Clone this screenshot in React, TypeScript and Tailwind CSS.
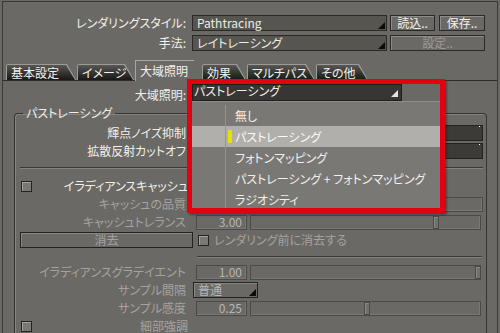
import React from "react"

const font = "font-['Noto_Sans_CJK_JP','Noto_Sans_CJK_SC',sans-serif] [font-feature-settings:'palt']"

function Tri({ light }: { light?: boolean }) {
  return (
    <svg width="7" height="7" viewBox="0 0 7 7" className="shrink-0">
      <polygon points="7,0 7,7 0,7" fill={light ? "#e6e4e0" : "#0b0b0b"} />
    </svg>
  )
}

function Checkbox() {
  return <div className="h-[11px] w-[11px] shrink-0 border border-[#242322] bg-[#7a7874] shadow-[inset_1px_1px_0_#a3a19d]" />
}

function Slider({ pos }: { pos: number }) {
  // pos = offset of the thumb inside the track, px
  return (
    <div className="relative ml-[3px] h-[15px] w-[231px] border border-[#4c4a47] shadow-[inset_-1px_-1px_0_#7a7874]">
      <div
        className="absolute top-0 bottom-0 w-[6px] border border-[#4c4a47] bg-[#72706c] shadow-[inset_1px_1px_0_#8a8884]"
        style={{ left: pos }}
      />
    </div>
  )
}

function NumField({ value }: { value: string }) {
  return (
    <div className="ml-[10px] flex h-[15px] w-[51px] items-center justify-end border border-[#4c4a47] pr-[4px] text-[#b9b7b3] shadow-[inset_-1px_-1px_0_#7a7874]">
      {value}
    </div>
  )
}

function Label({ text, dim }: { text: string; dim?: boolean }) {
  return (
    <div className={`w-[171px] shrink-0 text-right ${dim ? "text-[#a5a39f]" : "text-[#f2f0ec]"}`}>{text}</div>
  )
}

function Tab({ label, w }: { label: string; w: string }) {
  return (
    <div className={`h-[16px] ${w} bg-[#9d9b97] p-[1px] pb-0 [clip-path:polygon(0_0,calc(100%_-_9px)_0,100%_100%,0_100%)] rounded-tl-[2px]`}>
      <div className="flex h-full items-center bg-gradient-to-b from-[#5a5855] to-[#191817] pl-[4px] text-[#f4f2ee] [clip-path:polygon(0_0,calc(100%_-_9px)_0,100%_100%,0_100%)]">
        {label}
      </div>
    </div>
  )
}

const items = ["無し", "パストレーシング", "フォトンマッピング", "パストレーシング + フォトンマッピング", "ラジオシティ"]

export default function App() {
  return (
    <div className={`relative h-[333px] w-[500px] overflow-hidden bg-[#6b6965] pl-[2px] pt-[1px] text-[12px] leading-none ${font}`}>
      <div className="h-[340px] w-[496px] border-l border-t border-r border-[#3a3937]">
        {/* top rows */}
        <div className="flex h-[16px] items-center pt-0 mt-[13px]">
          <div className="w-[183px] text-right text-[#f2f0ec]">レンダリングスタイル:</div>
          <div className="ml-[6px] flex h-[16px] w-[195px] items-end justify-between border border-[#2a2927] bg-[#57554f] pb-[1px] pl-[4px] pr-[1px] text-[#eeece8]">
            <span className="self-center">Pathtracing</span>
            <Tri />
          </div>
          <div className="ml-[3px] flex h-[16px] w-[45px] items-center justify-center border border-[#2a2927] text-[#f2f0ec] shadow-[inset_1px_1px_0_#8e8c88]">読込..</div>
          <div className="ml-[4px] flex h-[16px] w-[46px] items-center justify-center border border-[#2a2927] text-[#f2f0ec] shadow-[inset_1px_1px_0_#8e8c88]">保存..</div>
        </div>
        <div className="mt-[4px] flex h-[16px] items-center">
          <div className="w-[183px] text-right text-[#f2f0ec]">手法:</div>
          <div className="ml-[6px] flex h-[16px] w-[195px] items-end justify-between border border-[#2a2927] bg-[#57554f] pb-[1px] pl-[4px] pr-[1px] text-[#eeece8]">
            <span className="self-center">レイトレーシング</span>
            <Tri />
          </div>
          <div className="ml-[3px] flex h-[16px] w-[95px] items-center justify-center border border-[#2a2927] text-[#9c9a96] shadow-[inset_1px_1px_0_#8e8c88]">設定..</div>
        </div>

        {/* tabs */}
        <div className="mt-[9px] flex h-[21px] items-end gap-[1px] border-b border-[#2e2d2b] pl-[3px]">
          <Tab label="基本設定" w="w-[70px]" />
          <Tab label="イメージ" w="w-[57px]" />
          <div className="mb-[-1px] flex h-[21px] w-[66px] items-center border-t border-l border-[#a8a6a2] bg-[#6b6965] pl-[4px] text-[#f4f2ee] [clip-path:polygon(0_0,calc(100%_-_7px)_0,100%_100%,0_100%)]">
            大域照明
          </div>
          <Tab label="効果" w="w-[44px]" />
          <Tab label="マルチパス" w="w-[68px]" />
          <Tab label="その他" w="w-[52px]" />
        </div>

        <div className="mt-[6px] flex h-[16px] items-center">
          <div className="w-[183px] text-right text-[#f2f0ec]">大域照明:</div>
          <div className="ml-[6px] h-[16px] w-[210px] bg-[#383634]" />
        </div>

        {/* group box */}
        <fieldset className="ml-[11px] mt-[3px] w-[473px] rounded-t-[4px] border-t border-l border-r border-[#353432] pb-[20px] pt-[5px] shadow-[inset_1px_1px_0_#868480]">
          <legend className="ml-[8px] px-[3px] leading-[14px] text-[#f2f0ec]">パストレーシング</legend>

          <div className="flex h-[16px] items-center">
            <Label text="輝点ノイズ抑制" />
            <div className="relative ml-[9px] h-[16px] w-[288px] border border-[#242321] bg-[#3d3b38]">
              <div className="absolute right-[2px] top-0 h-[1px] w-[1px] bg-[#ffffff]" />
            </div>
          </div>
          <div className="mt-[2px] flex h-[16px] items-center">
            <Label text="拡散反射カットオフ" />
            <div className="relative ml-[9px] h-[16px] w-[288px] border border-[#242321] bg-[#3d3b38]">
              <div className="absolute right-[2px] top-0 h-[1px] w-[1px] bg-[#ffffff]" />
            </div>
          </div>

          <div className="ml-[5px] mr-[3px] mt-[8px] h-[2px] border-t border-b border-t-[#3a3937] border-b-[#85837f]" />

          <div className="mt-[9px] flex h-[16px] items-center">
            <div className="flex w-[173px] items-center">
              <div className="ml-[6px]"><Checkbox /></div>
              <div className="flex-1 text-right text-[#f2f0ec]">イラディアンスキャッシュ</div>
            </div>
          </div>
          <div className="mt-[2px] flex h-[16px] items-center">
            <Label text="キャッシュの品質" dim />
            <div className="ml-[9px] h-[15px] w-[288px] border border-[#4c4a47] shadow-[inset_-1px_-1px_0_#7a7874]" />
          </div>
          <div className="mt-[2px] flex h-[16px] items-center">
            <Label text="キャッシュトレランス" dim />
            <NumField value="3.00" />
            <Slider pos={182} />
          </div>
          <div className="mt-[2px] flex h-[16px] items-center">
            <div className="ml-[5px] flex h-[16px] w-[173px] items-center justify-center border border-[#242321] text-[#a5a39f] shadow-[inset_1px_1px_0_#8a8884]">消去</div>
            <div className="ml-[5px]"><Checkbox /></div>
            <div className="ml-[5px] text-[#a5a39f]">レンダリング前に消去する</div>
          </div>

          <div className="ml-[182px] mr-[4px] mt-[8px] h-[2px] border-t border-b border-t-[#3a3937] border-b-[#85837f]" />

          <div className="mt-[6px] flex h-[16px] items-center">
            <Label text="イラディアンスグラデイエント" dim />
            <NumField value="1.00" />
            <Slider pos={224} />
          </div>
          <div className="mt-[2px] flex h-[16px] items-center">
            <Label text="サンプル間隔" dim />
            <div className="ml-[7px] flex h-[16px] w-[65px] items-end justify-between border border-[#242321] pb-[1px] pl-[4px] pr-[1px] text-[#b9b7b3] shadow-[inset_1px_1px_0_#8a8884]">
              <span className="self-center">普通</span>
              <Tri />
            </div>
          </div>
          <div className="mt-[2px] flex h-[16px] items-center">
            <Label text="サンプル感度" dim />
            <NumField value="0.25" />
            <Slider pos={113} />
          </div>
          <div className="mt-[2px] flex h-[16px] items-center">
            <div className="flex w-[173px] items-center">
              <div className="ml-[6px]"><Checkbox /></div>
              <div className="flex-1 text-right text-[#a5a39f]">細部強調</div>
            </div>
          </div>
        </fieldset>
      </div>

      {/* opened combo, marked in red */}
      <div className="absolute left-[187px] top-[79px] flex h-[134px] w-[258px] flex-col border-[5px] border-[#e3000f] bg-[#6b6965] shadow-[2px_2px_2px_rgba(0,0,0,0.35)]">
        <div className="flex h-[17px] shrink-0 items-center">
          <div className="flex h-[17px] w-[210px] items-end justify-between border border-[#1e1d1c] bg-[#383634] pb-[3px] pl-[1px] pr-[3px] text-[#f0eee9]">
            <span className="self-center">パストレーシング</span>
            <Tri light />
          </div>
        </div>
        <div className="flex-1 overflow-hidden border-t border-[#8e8c88] bg-[#7a7874] pt-[3px]">
          {items.map((it, i) => (
            <div key={it} className={`flex h-[21px] items-center ${i === 1 ? "bg-[#b1afab]" : ""}`}>
              <div className="h-full w-[34px] shrink-0 border-r border-[#959390]" />
              {i === 1 ? (
                <>
                  <div className="ml-[2px] h-[13px] w-[4px] bg-[#e8e000]" />
                  <span className="ml-[3px] text-[#fbfaf7]">{it}</span>
                </>
              ) : (
                <span className="ml-[9px] text-[#f2f0ec]">{it}</span>
              )}
            </div>
          ))}
        </div>
      </div>
    </div>
  )
}
